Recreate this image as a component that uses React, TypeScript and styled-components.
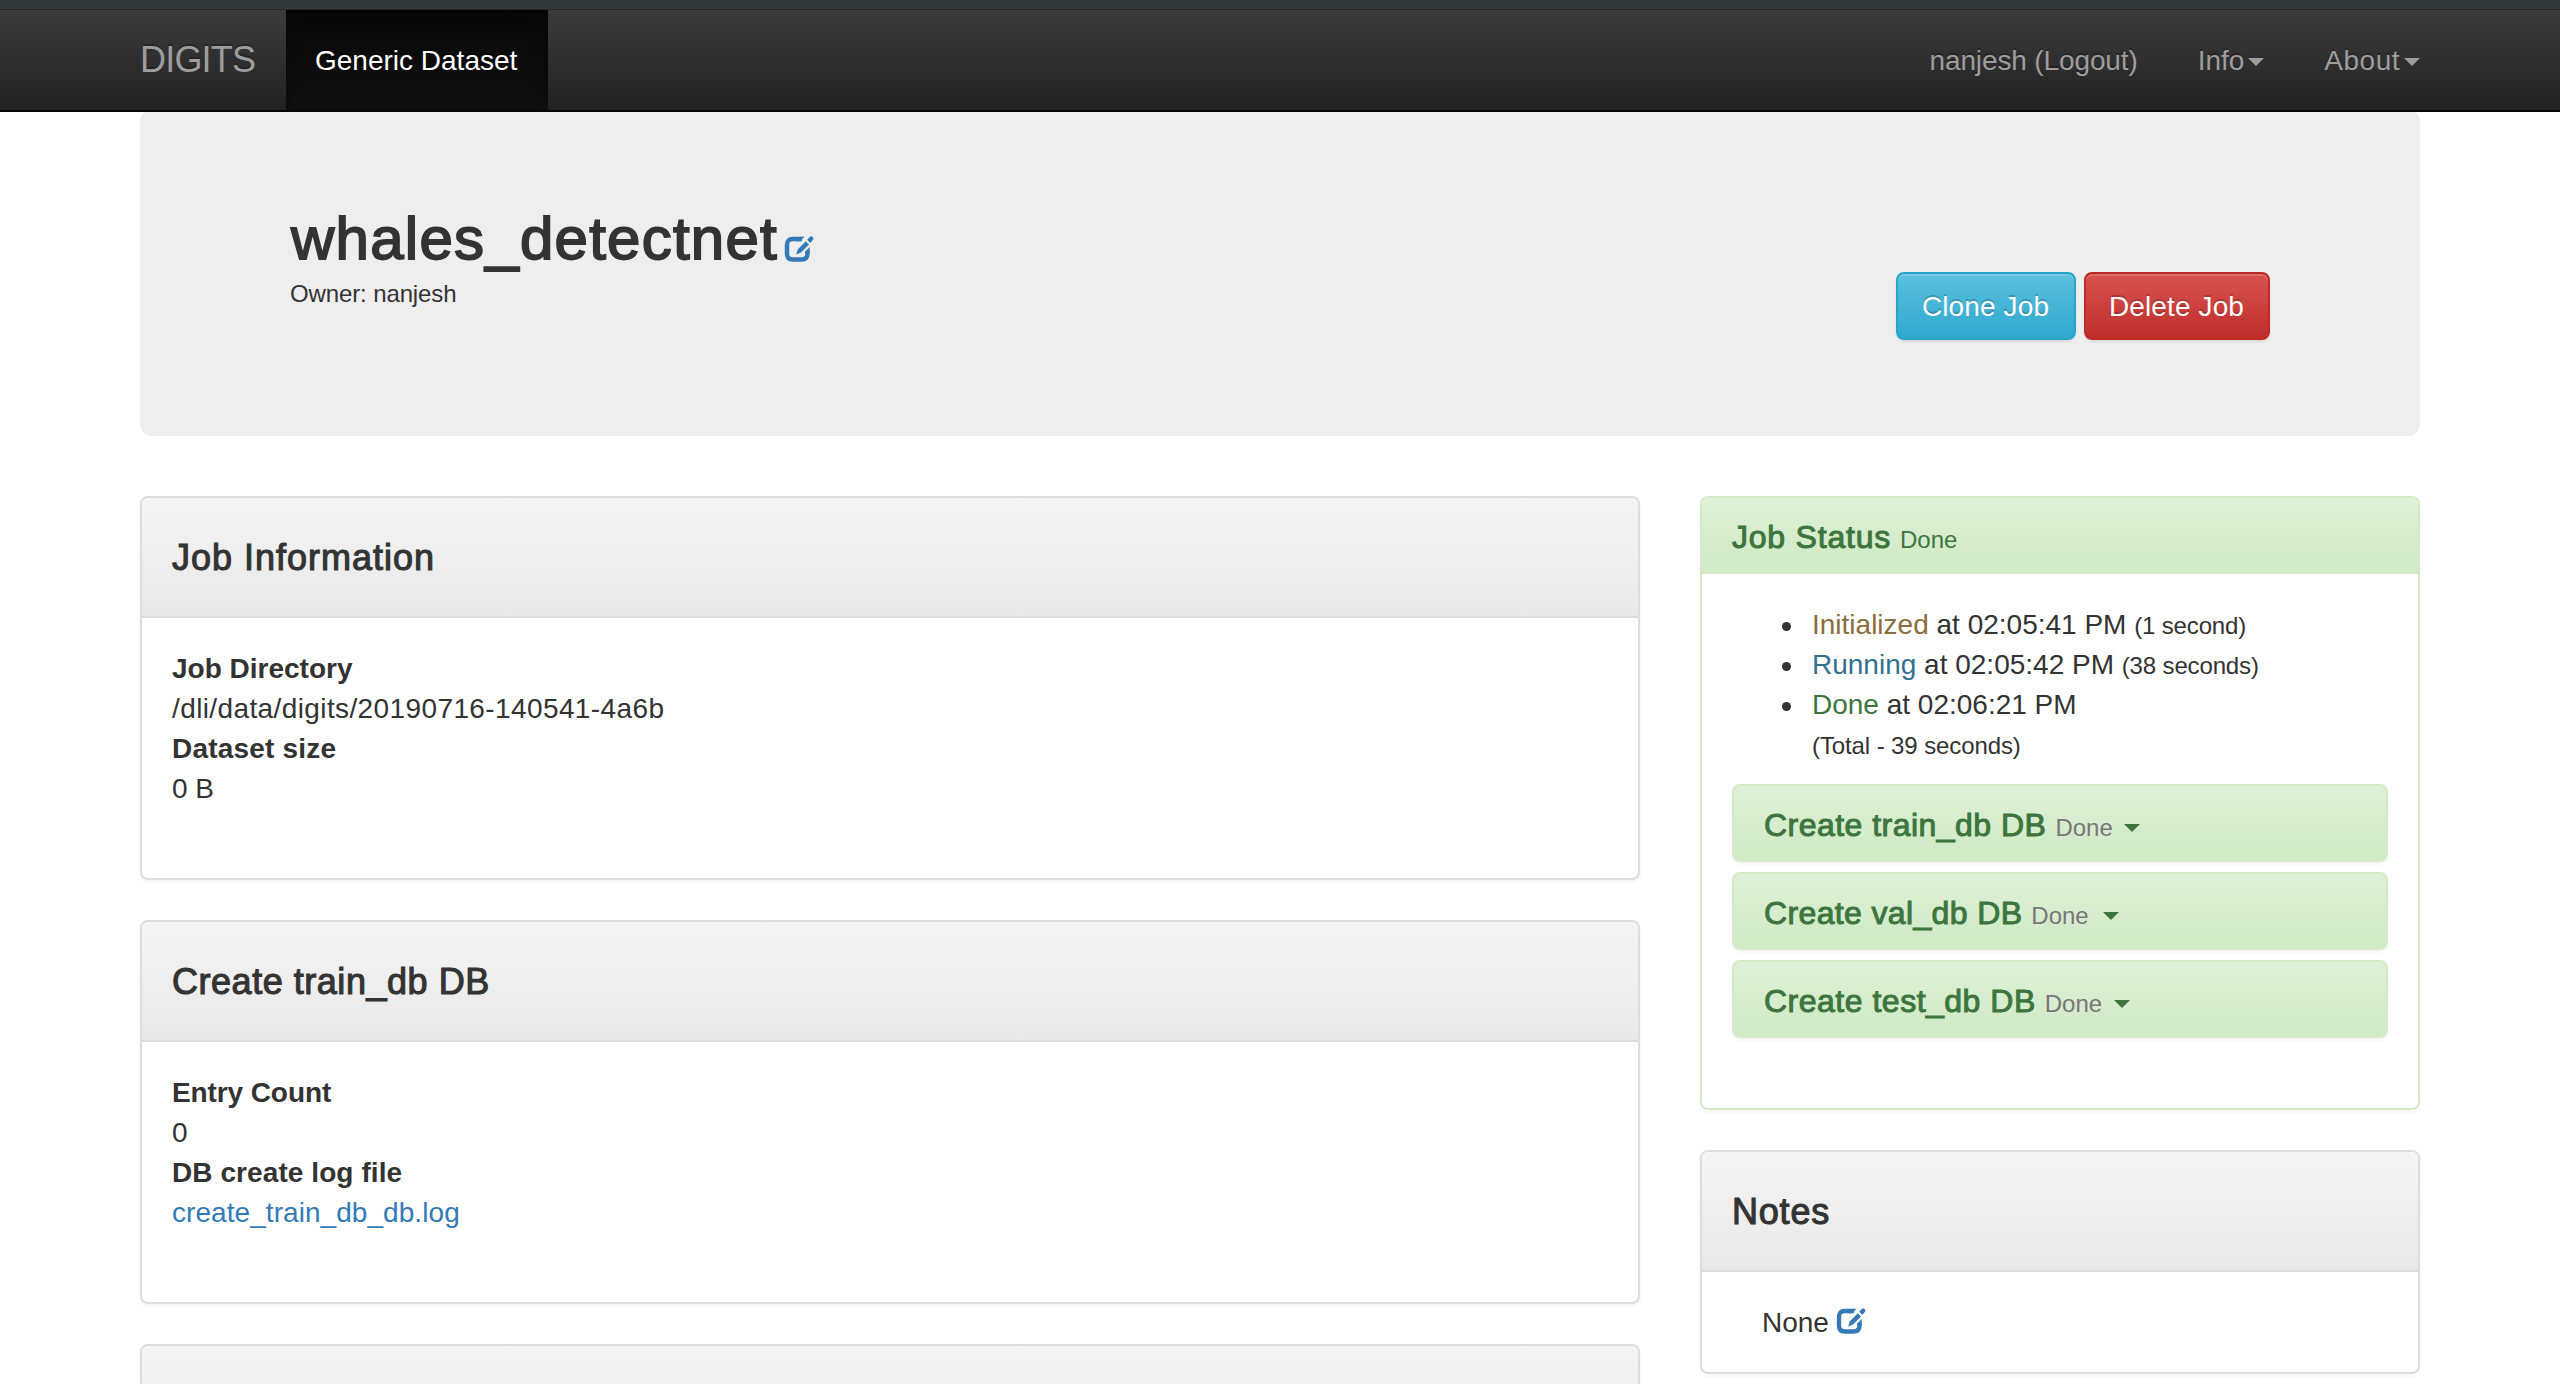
import React from "react";
import styled, { createGlobalStyle, css } from "styled-components";

const GlobalStyle = createGlobalStyle`
  *, *::before, *::after { box-sizing: border-box; }
  html, body { margin: 0; padding: 0; background: #fff; overflow: hidden; }
  body {
    font-family: "Liberation Sans", Arial, Helvetica, sans-serif;
    font-size: 28px;
    line-height: 40px;
    color: #333;
  }
  a { color: #337ab7; text-decoration: none; }
`;

/* letter spacing in px, so each run keeps its own measure */
type TrackProps = { $track?: number };
const tracking = css<TrackProps>`
  letter-spacing: ${(p) => p.$track ?? 0}px;
`;

const Page = styled.div`
  height: 1384px;
  overflow: hidden;
`;

const WindowEdge = styled.div`
  height: 10px;
  background: #33383b;
  border-bottom: 1px solid #262828;
`;

const Navbar = styled.nav`
  height: 102px;
  padding: 0 140px;
  display: flex;
  background: linear-gradient(to bottom, #3c3c3c 0%, #222 100%);
  border-bottom: 2px solid #080808;
  position: relative;
  z-index: 1;
`;

const Brand = styled.a<TrackProps>`
  && { color: #9d9d9d; }
  width: 146px;
  font-size: 36px;
  line-height: 40px;
  padding-top: 30px;
  text-shadow: 0 -2px 0 rgba(0, 0, 0, 0.25);
  white-space: nowrap;
  ${tracking}
`;

const navItem = css`
  line-height: 40px;
  padding-top: 31px;
  height: 100px;
  white-space: nowrap;
  text-shadow: 0 -2px 0 rgba(0, 0, 0, 0.25);
`;

const ActiveTab = styled.a<TrackProps>`
  ${navItem}
  ${tracking}
  && { color: #fff; }
  width: 262px;
  padding-left: 29px;
  background: linear-gradient(to bottom, #080808 0%, #0f0f0f 100%);
  box-shadow: inset 0 6px 18px rgba(0, 0, 0, 0.25);
`;

const NavRight = styled.div`
  margin-left: auto;
  display: flex;
  gap: 60px;
`;

const NavLink = styled.a`
  ${navItem}
  && { color: #9d9d9d; }
  display: flex;
`;

const Track = styled.span<TrackProps>`
  ${tracking}
`;

const Caret = styled.i<{ $gap: number }>`
  display: inline-block;
  width: 0;
  height: 0;
  margin-left: ${(p) => p.$gap}px;
  border-top: 8px solid currentColor;
  border-left: 8px solid transparent;
  border-right: 8px solid transparent;
  vertical-align: middle;
`;

const NavCaret = styled(Caret)`
  margin-top: 17px;
`;

const Container = styled.main`
  width: 2280px;
  margin: 0 auto;
`;

const Jumbotron = styled.header`
  height: 326px;
  margin-top: -2px;
  padding: 0 150px;
  border-radius: 12px;
  background: #eee;
  display: flex;
  justify-content: space-between;
`;

const JobHeading = styled.div`
  padding-top: 96px;
`;

const JobName = styled.h2<TrackProps>`
  margin: 0;
  padding-left: 1px;
  font-size: 60px;
  font-weight: 400;
  line-height: 66px;
  -webkit-text-stroke: 1.8px #333;
  display: flex;
  align-items: flex-start;
  ${tracking}
`;

const Small = styled.small<TrackProps>`
  font-size: 24px;
  ${tracking}
`;

const Owner = styled.div<TrackProps>`
  font-size: 24px;
  line-height: 34px;
  margin-top: 5px;
  ${tracking}
`;

const Buttons = styled.div`
  display: flex;
  gap: 8px;
  padding-top: 162px;
`;

const Button = styled.button<{ $from: string; $to: string; $edge: string; $w: number }>`
  width: ${(p) => p.$w}px;
  height: 68px;
  padding: 2px 1px 0 0;
  font: inherit;
  letter-spacing: 0.12px;
  color: #fff;
  border: 2px solid ${(p) => p.$edge};
  border-radius: 8px;
  background: linear-gradient(to bottom, ${(p) => p.$from} 0%, ${(p) => p.$to} 100%);
  text-shadow: 0 -2px 0 rgba(0, 0, 0, 0.2);
  box-shadow: inset 0 2px 0 rgba(255, 255, 255, 0.15), 0 2px 2px rgba(0, 0, 0, 0.075);
`;

const Columns = styled.div`
  display: grid;
  grid-template-columns: 1500px 720px;
  gap: 60px;
  align-items: start;
  margin-top: 60px;
`;

const Column = styled.div`
  display: flex;
  flex-direction: column;
  gap: 40px;
`;

const Panel = styled.section<{ $h: number; $edge?: string }>`
  height: ${(p) => p.$h}px;
  border: 2px solid ${(p) => p.$edge ?? "#ddd"};
  border-radius: 8px;
  background: #fff;
  box-shadow: 0 2px 4px rgba(0, 0, 0, 0.05);
  overflow: hidden;
`;

const PanelHeading = styled.div`
  height: 120px;
  padding: 40px 30px 0;
  border-bottom: 2px solid #ddd;
  background: linear-gradient(to bottom, #f5f5f5 0%, #e8e8e8 100%);
`;

const PanelTitle = styled.h4<TrackProps>`
  margin: 0;
  font-size: 36px;
  font-weight: 400;
  line-height: 40px;
  -webkit-text-stroke: 1.1px #333;
  ${tracking}
`;

const StatusHeading = styled.div`
  height: 76px;
  padding: 19px 30px 0;
  color: #3c763d;
  background: linear-gradient(to bottom, #dff0d8 0%, #d0e9c6 100%);
  border-bottom: 2px solid #d6e9c6;
`;

const StatusTitle = styled.h4`
  margin: 0;
  font-size: 32px;
  font-weight: 400;
  line-height: 40px;
  white-space: nowrap;
`;

const Medium = styled.span<TrackProps>`
  -webkit-text-stroke: 1px currentColor;
  ${tracking}
`;

const Details = styled.dl`
  margin: 0;
  padding: 31px 30px;
`;

const Term = styled.dt<TrackProps>`
  font-weight: 700;
  ${tracking}
`;

const Value = styled.dd<TrackProps>`
  margin: 0;
  ${tracking}
`;

const History = styled.ul`
  margin: 0;
  padding: 31px 0 0 110px;
  list-style: none;
`;

const Event = styled.li`
  position: relative;
  height: 40px;
  white-space: nowrap;

  &::before {
    content: "";
    position: absolute;
    left: -30px;
    top: 17px;
    width: 9px;
    height: 9px;
    border-radius: 50%;
    background: #333;
  }
`;

const Total = styled.div`
  padding-left: 110px;
  height: 40px;
`;

const State = styled.span<{ $c: string } & TrackProps>`
  color: ${(p) => p.$c};
  ${tracking}
`;

const Tasks = styled.div`
  display: flex;
  flex-direction: column;
  gap: 10px;
  padding: 19px 30px 0;
`;

const Task = styled.div`
  height: 78px;
  padding: 19px 30px 0;
  border: 2px solid #d6e9c6;
  border-radius: 8px;
  color: #3c763d;
  background: linear-gradient(to bottom, #dff0d8 0%, #d0e9c6 100%);
  box-shadow: 0 2px 4px rgba(0, 0, 0, 0.05);
`;

const TaskState = styled(Small)`
  color: #777;
  margin-left: 9px;
`;

const HeadState = styled(Small)`
  margin-left: 9px;
`;

const NoteBody = styled.div`
  padding: 31px 60px;
  display: flex;
  align-items: flex-start;
`;

const EditGlyph = styled.svg<{ $left: number; $top: number }>`
  display: block;
  width: 30px;
  height: 28px;
  margin: ${(p) => p.$top}px 0 0 ${(p) => p.$left}px;
`;

const EditIcon = ({ left, top }: { left: number; top: number }) => (
  <EditGlyph viewBox="0 0 30 28" $left={left} $top={top} strokeWidth="0" aria-hidden="true">
    <path
      d="M18 4H8.500C5 4 3 6 3 9.500V18.500C3 22.500 5 24.500 8.500 24.500H17.500C21.500 24.500 23.500 22.500 23.500 18.500V16"
      fill="none"
      stroke="#337ab7"
      strokeWidth="4.400"
    />
    <path d="M16.500 1.800H20.500L16 6.200H12zM25.700 12V18L21.300 19V16.500z" fill="#337ab7" />
    <path d="M12.200 19.600L13.700 14.600L21.800 6.200L25 9.400L17 17.500z" fill="#337ab7" />
    <path d="M23.100 4.800L26 1.700Q27 .6 28.200 1.800L29 2.600Q30 3.700 29 4.800L26.300 7.900z" fill="#337ab7" />
  </EditGlyph>
);

const tasks = [
  { name: "Create train_db DB", track: 0.47, caret: 11 },
  { name: "Create val_db DB", track: 0.36, caret: 14 },
  { name: "Create test_db DB", track: 0.5, caret: 12 },
];

const events = [
  { state: "Initialized", color: "#8a6d3b", at: " at 02:05:41 PM ", took: "(1 second)" },
  { state: "Running", color: "#31708f", at: " at 02:05:42 PM ", took: "(38 seconds)" },
  { state: "Done", color: "#3c763d", at: " at 02:06:21 PM", took: "" },
];

export default function App() {
  return (
    <Page>
      <GlobalStyle />
      <WindowEdge />
      <Navbar>
        <Brand $track={-0.8}>DIGITS</Brand>
        <ActiveTab>Generic Dataset</ActiveTab>
        <NavRight>
          <NavLink>
            <Track $track={-0.13}>nanjesh (Logout)</Track>
          </NavLink>
          <NavLink>
            <Track>Info</Track>
            <NavCaret $gap={4} />
          </NavLink>
          <NavLink>
            <Track $track={0.5}>About</Track>
            <NavCaret $gap={4} />
          </NavLink>
        </NavRight>
      </Navbar>
      <Container>
        <Jumbotron>
          <JobHeading>
            <JobName $track={1.25}>
              whales_detectnet
              <EditIcon left={6} top={29} />
            </JobName>
            <Owner $track={-0.12}>Owner: nanjesh</Owner>
          </JobHeading>
          <Buttons>
            <Button $from="#5bc0de" $to="#2fa8cf" $edge="#28a4c9" $w={180}>
              Clone Job
            </Button>
            <Button $from="#d9534f" $to="#be2d2a" $edge="#b92c28" $w={186}>
              Delete Job
            </Button>
          </Buttons>
        </Jumbotron>
        <Columns>
          <Column>
            <Panel $h={384}>
              <PanelHeading>
                <PanelTitle $track={1}>Job Information</PanelTitle>
              </PanelHeading>
              <Details>
                <Term>Job Directory</Term>
                <Value $track={0.39}>/dli/data/digits/20190716-140541-4a6b</Value>
                <Term $track={0.2}>Dataset size</Term>
                <Value>0 B</Value>
              </Details>
            </Panel>
            <Panel $h={384}>
              <PanelHeading>
                <PanelTitle $track={0.53}>Create train_db DB</PanelTitle>
              </PanelHeading>
              <Details>
                <Term $track={-0.1}>Entry Count</Term>
                <Value>0</Value>
                <Term $track={0.08}>DB create log file</Term>
                <Value $track={0.06}>
                  <a>create_train_db_db.log</a>
                </Value>
              </Details>
            </Panel>
            <Panel $h={384}>
              <PanelHeading />
            </Panel>
          </Column>
          <Column>
            <Panel $h={614} $edge="#d6e9c6">
              <StatusHeading>
                <StatusTitle>
                  <Medium $track={0.78}>Job Status</Medium>
                  <HeadState>Done</HeadState>
                </StatusTitle>
              </StatusHeading>
              <History>
                {events.map((e) => (
                  <Event key={e.state}>
                    <State $c={e.color}>{e.state}</State>
                    {e.at}
                    <Small $track={-0.15}>{e.took}</Small>
                  </Event>
                ))}
              </History>
              <Total>
                <Small $track={-0.1}>(Total - 39 seconds)</Small>
              </Total>
              <Tasks>
                {tasks.map((t) => (
                  <Task key={t.name}>
                    <StatusTitle>
                      <Medium $track={t.track}>{t.name}</Medium>
                      <TaskState>Done</TaskState>
                      <Caret $gap={t.caret} />
                    </StatusTitle>
                  </Task>
                ))}
              </Tasks>
            </Panel>
            <Panel $h={224}>
              <PanelHeading>
                <PanelTitle $track={0.8}>Notes</PanelTitle>
              </PanelHeading>
              <NoteBody>
                None
                <EditIcon left={7} top={4} />
              </NoteBody>
            </Panel>
          </Column>
        </Columns>
      </Container>
    </Page>
  );
}
